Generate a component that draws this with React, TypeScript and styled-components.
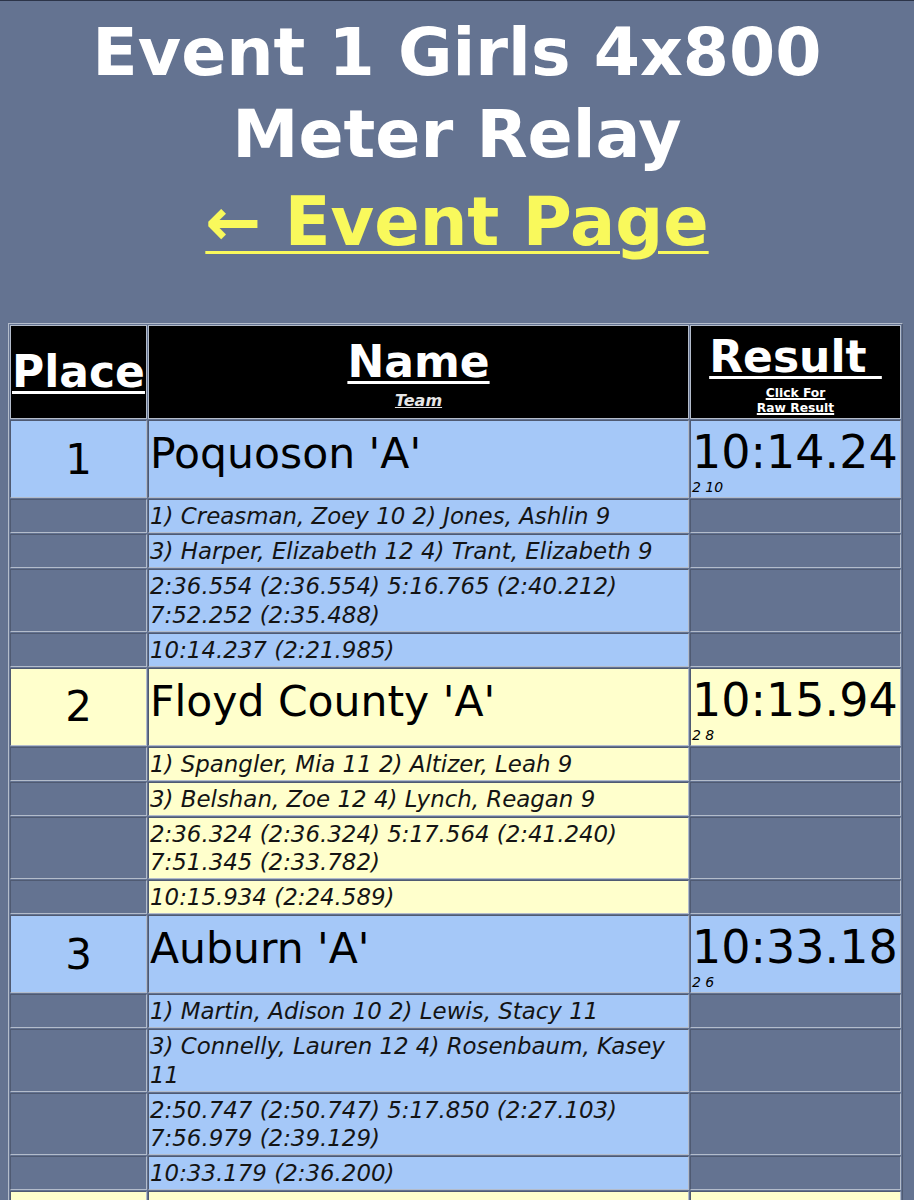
import React from 'react';
import styled, { createGlobalStyle } from 'styled-components';

const colors = {
  page: '#647391',
  blue: '#a5c8f8',
  yellow: '#ffffcc',
  link: '#f9f95c',
  borderDark: '#4f5a72',
  borderLight: '#b3bccb',
};

interface RelayEntry {
  place: number;
  team: string;
  time: string;
  points: string;
  legs: string[];
}

const entries: RelayEntry[] = [
  {
    place: 1,
    team: "Poquoson 'A'",
    time: '10:14.24',
    points: '2 10',
    legs: [
      '1) Creasman, Zoey 10 2) Jones, Ashlin 9',
      '3) Harper, Elizabeth 12 4) Trant, Elizabeth 9',
      '2:36.554 (2:36.554) 5:16.765 (2:40.212) 7:52.252 (2:35.488)',
      '10:14.237 (2:21.985)',
    ],
  },
  {
    place: 2,
    team: "Floyd County 'A'",
    time: '10:15.94',
    points: '2 8',
    legs: [
      '1) Spangler, Mia 11 2) Altizer, Leah 9',
      '3) Belshan, Zoe 12 4) Lynch, Reagan 9',
      '2:36.324 (2:36.324) 5:17.564 (2:41.240) 7:51.345 (2:33.782)',
      '10:15.934 (2:24.589)',
    ],
  },
  {
    place: 3,
    team: "Auburn 'A'",
    time: '10:33.18',
    points: '2 6',
    legs: [
      '1) Martin, Adison 10 2) Lewis, Stacy 11',
      '3) Connelly, Lauren 12 4) Rosenbaum, Kasey 11',
      '2:50.747 (2:50.747) 5:17.850 (2:27.103) 7:56.979 (2:39.129)',
      '10:33.179 (2:36.200)',
    ],
  },
  {
    place: 4,
    team: "Hidden Valley 'A'",
    time: '10:36.02',
    points: '2 5',
    legs: [
      '1) Smith, Anna 11 2) Brown, Kate 10',
      '3) Davis, Emma 12 4) Wilson, Grace 9',
      '2:38.410 (2:38.410) 5:20.118 (2:41.708) 7:59.602 (2:39.484)',
      '10:36.015 (2:36.413)',
    ],
  },
];

const GlobalStyle = createGlobalStyle`
  html, body {
    margin: 0;
    padding: 0;
    background: ${colors.page};
  }
  body {
    font-family: "DejaVu Sans", Verdana, sans-serif;
  }
`;

export default function App() {
  return (
    <>
      <GlobalStyle />
      <Page>
        <Title>Event 1 Girls 4x800 Meter Relay</Title>
        <BackLink href="#">← Event Page</BackLink>
        <ResultsTable>
          <thead>
            <tr>
              <HeadCell $width={137}>
                <HeadLabel>Place</HeadLabel>
              </HeadCell>
              <HeadCell>
                <HeadLabel>Name</HeadLabel>
                <SubLabel>Team</SubLabel>
              </HeadCell>
              <HeadCell $width={211}>
                <HeadLabel>Result&nbsp;</HeadLabel>
                <RawLink>Click For</RawLink>
                <RawLink>Raw Result</RawLink>
              </HeadCell>
            </tr>
          </thead>
          <tbody>
            {entries.map((entry) => {
              const bg = entry.place % 2 === 1 ? colors.blue : colors.yellow;
              return (
                <React.Fragment key={entry.place}>
                  <tr>
                    <PlaceCell $bg={bg}>{entry.place}</PlaceCell>
                    <TeamCell $bg={bg}>{entry.team}</TeamCell>
                    <TimeCell $bg={bg}>
                      <TimeText>{entry.time}</TimeText>
                      <Points>{entry.points}</Points>
                    </TimeCell>
                  </tr>
                  {entry.legs.map((leg) => (
                    <tr key={leg}>
                      <EmptyCell />
                      <LegCell $bg={bg}>{leg}</LegCell>
                      <EmptyCell />
                    </tr>
                  ))}
                </React.Fragment>
              );
            })}
          </tbody>
        </ResultsTable>
      </Page>
    </>
  );
}

const Page = styled.div`
  border-top: 1px solid #2c3448;
  padding: 10px 8px 40px;
  text-align: center;
`;

const Title = styled.h1`
  margin: 0 auto;
  width: 780px;
  font-size: 66.5px;
  line-height: 82px;
  font-weight: bold;
  color: #ffffff;
`;

const BackLink = styled.a`
  display: inline-block;
  margin-top: 6px;
  font-size: 67px;
  line-height: 82px;
  font-weight: bold;
  color: ${colors.link};
  text-decoration: underline;
  text-decoration-thickness: 3px;
  text-underline-offset: 6px;
`;

const ResultsTable = styled.table`
  margin-top: 60px;
  width: 895px;
  border-collapse: separate;
  border-spacing: 1px;
  border: 1px solid;
  border-color: ${colors.borderLight} ${colors.borderDark} ${colors.borderDark} ${colors.borderLight};
  text-align: left;
`;

const Cell = styled.td<{ $bg?: string }>`
  box-sizing: border-box;
  padding: 1px;
  border: 1px solid;
  border-color: ${colors.borderDark} ${colors.borderLight} ${colors.borderLight} ${colors.borderDark};
  background: ${(p) => p.$bg || 'transparent'};
  color: #000;
`;

const HeadCell = styled.th<{ $width?: number }>`
  box-sizing: border-box;
  width: ${(p) => (p.$width ? `${p.$width}px` : 'auto')};
  height: 94px;
  padding: 1px;
  border: 1px solid ${colors.borderLight};
  background: #000;
  color: #fff;
  text-align: center;
  vertical-align: middle;
`;

const HeadLabel = styled.div`
  font-size: 44px;
  line-height: 58px;
  font-weight: bold;
  text-decoration: underline;
  text-decoration-thickness: 3px;
  text-underline-offset: 4px;
  white-space: pre;
`;

const SubLabel = styled.div`
  font-size: 16px;
  line-height: 20px;
  font-weight: bold;
  font-style: italic;
  text-decoration: underline;
  color: #e6e6e6;
`;

const RawLink = styled.div`
  font-size: 12.3px;
  line-height: 15px;
  font-weight: bold;
  text-decoration: underline;
  text-decoration-thickness: 2px;
`;

const PlaceCell = styled(Cell)`
  text-align: center;
  vertical-align: middle;
  font-size: 42px;
`;

const TeamCell = styled(Cell)`
  vertical-align: baseline;
  font-size: 42.5px;
  line-height: 50px;
`;

const TimeCell = styled(Cell)`
  vertical-align: baseline;
  padding-top: 4px;
`;

const TimeText = styled.div`
  font-size: 46px;
  line-height: 54px;
`;

const Points = styled.div`
  font-size: 14px;
  line-height: 17px;
  font-style: italic;
`;

const LegCell = styled(Cell)`
  padding: 2px 1px 1.5px;
  font-size: 22.9px;
  line-height: 28.5px;
  font-style: italic;
  color: #141414;
`;

const EmptyCell = styled(Cell)``;
